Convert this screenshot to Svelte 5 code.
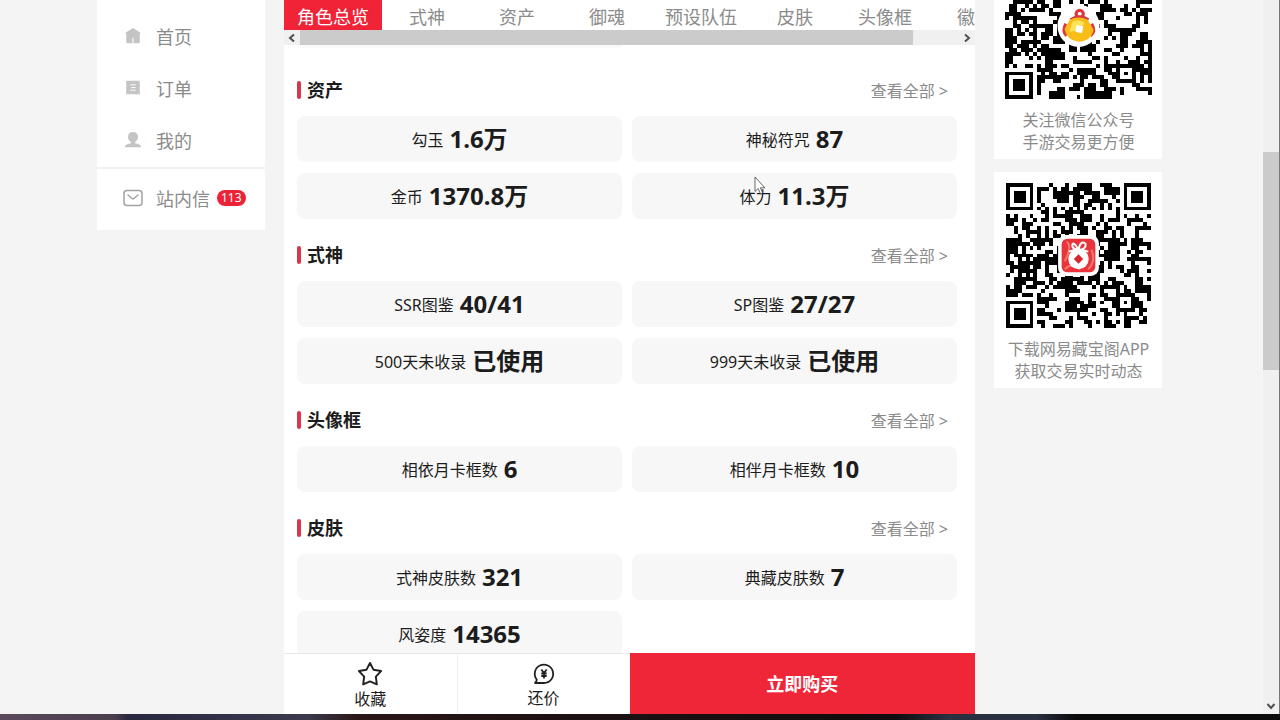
<script>
  const tabs = ['角色总览', '式神', '资产', '御魂', '预设队伍', '皮肤', '头像框', '徽章'];

  const sections = [
    { title: '资产', items: [['勾玉', '1.6万'], ['神秘符咒', '87'], ['金币', '1370.8万'], ['体力', '11.3万']] },
    { title: '式神', items: [['SSR图鉴', '40/41'], ['SP图鉴', '27/27'], ['500天未收录', '已使用'], ['999天未收录', '已使用']] },
    { title: '头像框', items: [['相依月卡框数', '6'], ['相伴月卡框数', '10']] },
    { title: '皮肤', items: [['式神皮肤数', '321'], ['典藏皮肤数', '7'], ['风姿度', '14365']] }
  ];

  const SIZE = 37;

  // Dark modules of a 37x37 code: finders, alignment mark, timing lines, then data.
  function modules(seed) {
    let s = seed;
    const rand = () => {
      s = (s * 1103515245 + 12345) % 2147483648;
      return s / 2147483648;
    };
    const ring = (x, y, cx, cy) => Math.max(Math.abs(x - cx), Math.abs(y - cy));
    let d = '';
    let above = [];
    for (let y = 0; y < SIZE; y++) {
      const row = [];
      for (let x = 0; x < SIZE; x++) {
        const near = (row[x - 1] ? 1 : 0) + (above[x] ? 1 : 0);
        let on = rand() < 0.38 + near * 0.13;
        row.push(on);
        if (y === 6) on = x % 2 === 0;
        if (x === 6) on = y % 2 === 0;
        for (const [cx, cy] of [[3, 3], [33, 3], [3, 33]]) {
          const r = ring(x, y, cx, cy);
          if (r <= 4) on = r === 3 || r <= 1;
        }
        const a = ring(x, y, 30, 30);
        if (a <= 2) on = a !== 1;
        if (on) d += `M${x} ${y}h1v1h-1z`;
      }
      above = row;
    }
    return d;
  }

  const wechatCode = modules(4217);
  const appCode = modules(90631);
</script>

<div class="page">
  <div class="view">
    <div class="columns">
      <aside class="side">
        <nav class="card menu" aria-label="主菜单">
          <a href="#home">
            <svg viewBox="0 0 20 20"><path fill="#c4c4c4" d="M10 1 L18 6 V8 H17.500 V17 Q17.500 18 16.500 18 H10.600 V12 H9.400 V18 H3.500 Q2.500 18 2.500 17 V8 H2 V6Z" /></svg>
            首页
          </a>
          <a href="#orders">
            <svg viewBox="0 0 20 20"><path fill="#c4c4c4" d="M2.500 2 H17.500 V17.500 L15.500 16.500 L13.500 17.500 L11.500 16.500 L10 17.500 L8.500 16.500 L6.500 17.500 L4.500 16.500 L2.500 17.500Z" /><path d="M7 6.500h6M8 9.500h5M7 12.500h6" stroke="#fff" stroke-width="1" /></svg>
            订单
          </a>
          <a href="#mine">
            <svg viewBox="0 0 20 20"><path fill="#c4c4c4" d="M10 1 C13.500 1 15.500 3 15.500 6 C16 8.500 14 11 12.500 12 V13.500 C15 14.500 19 14.500 19 18 H1 C1 14.500 5 14.500 7.500 13.500 V12 C6 11 4 8.500 4.500 6 C4.500 3 6.500 1 10 1Z" /></svg>
            我的
          </a>
        </nav>
        <nav class="card inbox" aria-label="消息">
          <a href="#inbox">
            <svg viewBox="0 0 20 20" fill="none" stroke="#a2a2a2" stroke-width="1.500"><rect x="1" y="2.500" width="18" height="15" rx="3" /><path d="M5 7 L9 10.500 Q10 11.200 11 10.500 L15 7" stroke-linecap="round" /></svg>
            站内信
            <span class="count">113</span>
          </a>
        </nav>
      </aside>

      <main class="panel">
        <nav class="tabs" aria-label="角色信息">
          {#each tabs as tab, i}
            <button type="button" class:active={i === 0}>{tab}</button>
          {/each}
        </nav>
        <div class="hscroll">
          <button type="button" aria-label="向左"><svg viewBox="0 0 10 10"><path d="M7 1.500 L3 5 L7 8.500" /></svg></button>
          <div class="htrack"><div class="hthumb"></div></div>
          <button type="button" aria-label="向右"><svg viewBox="0 0 10 10"><path d="M3 1.500 L7 5 L3 8.500" /></svg></button>
        </div>

        <div class="body">
          <div class="tail"></div>
          {#each sections as section}
            <section>
              <header>
                <h2>{section.title}</h2>
                <a href="#all">查看全部 &gt;</a>
              </header>
              <div class="stats">
                {#each section.items as [label, value]}
                  <div class="stat"><span>{label}</span><strong>{value}</strong></div>
                {/each}
              </div>
            </section>
          {/each}
        </div>

        <footer>
          <button type="button">
            <svg viewBox="0 0 24 24"><path d="M12 1.800 L15.200 8 L22.200 9.300 L17.400 14.500 L18.300 21.600 L12 18.900 L5.700 21.600 L6.600 14.500 L1.800 9.300 L8.800 8Z" /></svg>
            收藏
          </button>
          <button type="button" class="offer">
            <svg viewBox="0 0 24 24"><path d="M3 21 H12 A9.200 9.200 0 1 0 4.800 17.600 Q4.700 19.500 3 21Z" /><path d="M9.300 7.500 L12 11 L14.700 7.500 M12 11 V16.500 M9.300 11.500 H14.700 M9.300 14 H14.700" /></svg>
            还价
          </button>
          <button type="button" class="buy">立即购买</button>
        </footer>
      </main>

      <aside class="codes">
        <div class="card code first">
          <svg viewBox="0 12 37 25" role="img" aria-label="微信公众号二维码">
            <path d={wechatCode} shape-rendering="crispEdges" />
            <circle cx="18.500" cy="18.500" r="5.300" fill="#fff" />
            <g fill="none" stroke="#d83a3d" stroke-width=".8"><circle cx="18.800" cy="15.500" r=".9" /><path d="M16.500 17 Q18.800 15.500 21 17M15.300 18 Q14.300 20 15.500 21M21.800 18 Q23 20 21.500 21" /></g>
            <path d="M16.300 17 Q18.500 15.800 20.800 17 L22.300 19.500 Q21.700 22.400 18.500 22.500 Q15.500 22.200 15 19.300Z" fill="#f9bd17" />
            <path d="M17 17.500 Q19 16.500 20 18 Q18 20 16.200 20Z" fill="#ffe35a" />
            <path d="M18 18.300 L19.700 18.600 L19.400 20.400 L17.700 20Z" fill="#fff" />
          </svg>
          <p>关注微信公众号<br />手游交易更方便</p>
        </div>
        <div class="card code">
          <svg viewBox="0 0 37 37" role="img" aria-label="藏宝阁APP二维码">
            <path d={appCode} shape-rendering="crispEdges" />
            <rect x="13.300" y="13.300" width="10.400" height="10.400" rx="2" fill="#fff" />
            <rect x="14.200" y="14.200" width="8.600" height="8.600" rx="1.500" fill="#e8343a" />
            <path d="M15 20 Q17 16 15.500 15M21.800 17 Q23 20 21 22M15 22 Q17 20 19 22" fill="none" stroke="#f27a70" stroke-width=".5" />
            <path d="M18.500 17 Q17 14.500 16.900 16 Q17 17 18.500 17 Q19 14.500 20.300 15.500 Q20.500 17 18.500 17 M16 17.500 Q18.500 16.500 21 17.500" fill="none" stroke="#fff" stroke-width=".5" />
            <circle cx="18.500" cy="19.400" r="2.600" fill="#fff" />
            <path d="M18.500 18.200 L19.700 19.400 L18.500 20.600 L17.300 19.400Z" fill="#d8262f" />
          </svg>
          <p>下载网易藏宝阁APP<br />获取交易实时动态</p>
        </div>
      </aside>
    </div>

    <div class="vscroll">
      <div class="vtrack"><div class="vthumb"></div></div>
      <button type="button" aria-label="向下"><svg viewBox="0 0 10 10"><path d="M1.500 3 L5 7 L8.500 3" /></svg></button>
    </div>
  </div>
  <div class="backdrop"></div>

  <svg class="cursor" viewBox="0 0 12 19" aria-hidden="true"><path d="M1 1 V15.500 L4.200 12.500 L6.500 18 L8.700 17 L6.400 11.800 H10.800Z" fill="#fff" fill-opacity=".8" stroke="#444" stroke-width=".8" /></svg>
</div>

<style>
  :global(body) {
    margin: 0;
    background: #f4f4f4;
  }
  .page {
    position: relative;
    display: flex;
    flex-direction: column;
    height: 100vh;
    overflow: hidden;
    font-family: 'Noto Sans', 'Noto Sans CJK SC', sans-serif;
    font-size: 16px;
    color: #1c1c1c;
  }
  button {
    margin: 0;
    padding: 0;
    border: 0;
    background: none;
    font: inherit;
    color: inherit;
  }
  a {
    color: inherit;
    text-decoration: none;
  }
  .view {
    flex: 1;
    min-height: 0;
    display: flex;
  }
  .columns {
    flex: 1;
    min-width: 0;
    display: grid;
    grid-template-columns: 168px minmax(0, 691px) 168px;
    column-gap: 19px;
    justify-content: center;
    padding-right: 4px;
  }
  .card {
    background: #fff;
  }

  /* Left menu */
  .side a {
    display: flex;
    align-items: center;
    height: 52px;
    padding-left: 26px;
    font-size: 18px;
    color: #8b8b8b;
  }
  .side svg {
    width: 20px;
    height: 20px;
    margin-right: 13px;
  }
  .menu svg {
    width: 18px;
    height: 18px;
    margin: 0 14px 0 1px;
  }
  .menu {
    padding: 10px 0 1px;
    border-bottom: 2px solid #f0f0f0;
  }
  .inbox {
    padding: 3px 0 6px;
  }
  .count {
    margin-left: 7px;
    padding: 0 4px;
    border-radius: 8px;
    background: #ec2337;
    color: #fff;
    font-size: 12px;
    line-height: 16px;
  }

  /* Centre panel */
  .panel {
    min-height: 0;
    display: flex;
    flex-direction: column;
    overflow: hidden;
    background: #fff;
  }
  .tabs {
    flex: none;
    display: flex;
    height: 30px;
    overflow: hidden;
  }
  .tabs button {
    flex: none;
    min-width: 90px;
    padding: 4px 13px 0;
    font-size: 18px;
    line-height: 26px;
    color: #8b8b8b;
  }
  .tabs .active {
    background: #f02337;
    color: #fff;
  }
  .hscroll {
    flex: none;
    display: flex;
    height: 15px;
    background: #f0f0f0;
  }
  .hscroll button {
    display: grid;
    place-items: center;
    width: 16px;
  }
  .hscroll svg,
  .vscroll svg {
    width: 10px;
    height: 10px;
    fill: none;
    stroke: #505050;
    stroke-width: 2;
  }
  .htrack {
    flex: 1;
  }
  .hthumb {
    width: 93%;
    height: 100%;
    background: #cbcbcb;
  }
  .body {
    flex: 1;
    min-height: 0;
    overflow: hidden;
    padding: 0 18px 0 13px;
  }
  .tail {
    width: calc(50% - 5px);
    height: 3px;
    margin-bottom: 6px;
    border-radius: 0 0 8px 8px;
    background: #fafafa;
  }
  header {
    display: flex;
    align-items: center;
    justify-content: space-between;
    height: 52px;
    padding: 10px 9px 0 0;
  }
  h2 {
    display: flex;
    align-items: center;
    gap: 6px;
    margin: 0;
    font-size: 18px;
    line-height: 26px;
  }
  h2::before {
    content: '';
    width: 4px;
    height: 18px;
    border-radius: 2px;
    background: #d9364b;
  }
  header a {
    color: #8b8b8b;
  }
  .stats {
    display: grid;
    grid-template-columns: 1fr 1fr;
    gap: 11px 10px;
  }
  .stat {
    display: flex;
    align-items: center;
    justify-content: center;
    gap: 6px;
    height: 46px;
    border-radius: 8px;
    background: #f7f7f7;
  }
  .stat strong {
    font-size: 24px;
    line-height: 34px;
  }
  footer {
    flex: none;
    display: grid;
    grid-template-columns: 1fr 1fr 2fr;
    height: 61px;
  }
  footer button {
    display: flex;
    flex-direction: column;
    align-items: center;
    justify-content: center;
    padding-top: 3px;
    border-top: 1px solid #e8e8e8;
    line-height: 24px;
  }
  footer svg {
    width: 26px;
    height: 26px;
    fill: none;
    stroke: #222;
    stroke-width: 1.8;
    stroke-linejoin: round;
  }
  .offer {
    border-left: 1px solid #efefef;
  }
  .offer svg {
    width: 24px;
    height: 24px;
  }
  footer .buy {
    padding: 0;
    border: 0;
    background: #ef2637;
    color: #fff;
    font-size: 18px;
    font-weight: 700;
  }

  /* Code cards */
  .code {
    padding: 11px 11px 6px 12px;
    margin-bottom: 13px;
  }
  .code.first {
    padding: 0 10px 6px 11px;
  }
  .code svg {
    display: block;
    width: 100%;
  }
  .code p {
    margin: 10px -10px 0;
    text-align: center;
    line-height: 22px;
    white-space: nowrap;
    color: #8b8b8b;
  }

  /* Window scrollbar */
  .vscroll {
    flex: none;
    display: flex;
    flex-direction: column;
    width: 16px;
    border-right: 1px solid #777;
    background: #f0f0f0;
  }
  .vtrack {
    flex: 1;
    padding-top: 152px;
  }
  .vthumb {
    height: 218px;
    background: #cbcbcb;
  }
  .vscroll button {
    display: grid;
    place-items: center;
    height: 16px;
  }
  .backdrop {
    flex: none;
    height: 6px;
    background: linear-gradient(90deg, #5a4a5c 0, #4a3d4c 9%, #27273f 10%, #3c3a4c 24%, #2a1618 28%, #1c1012 48%, #0e0c0e 70%, #29303f 74%, #29303f 81%, #0b0b0c 84%, #0b0b0c 100%);
  }
  .cursor {
    position: absolute;
    left: 754px;
    top: 176px;
    width: 12px;
    height: 19px;
  }
</style>
